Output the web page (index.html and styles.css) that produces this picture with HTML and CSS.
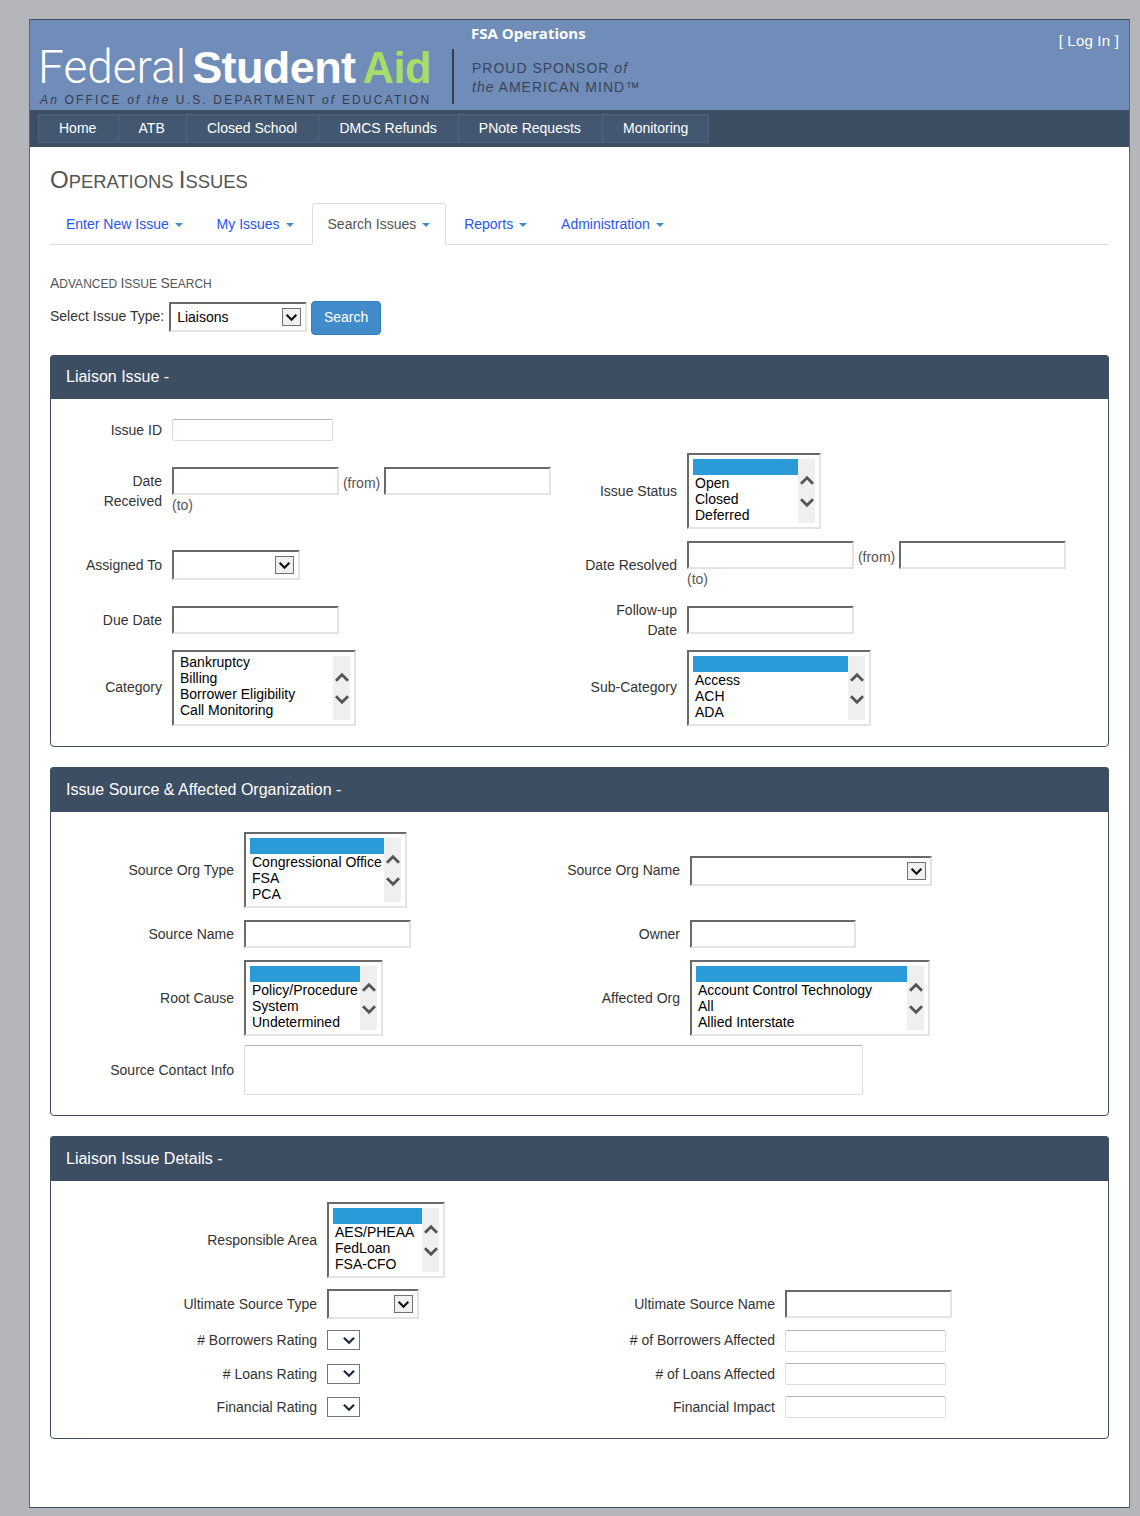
FILE: index.html
```html
<!DOCTYPE html>
<html lang="en">
<head>
    <meta charset="UTF-8">
    <meta name="viewport" content="width=device-width, initial-scale=1.0">
    <title>Operations Issues</title>
    <link rel="stylesheet" href="styles.css">
</head>
<body>
    <svg class="defs" width="0" height="0">
        <symbol id="chev-down" viewBox="0 0 12 8"><path d="M1.5 1.5 L6 6 L10.5 1.5" fill="none" stroke="currentColor"/></symbol>
        <symbol id="chev-up" viewBox="0 0 12 8"><path d="M1.5 6.5 L6 2 L10.5 6.5" fill="none" stroke="currentColor"/></symbol>
    </svg>
    <div class="wrapper">
        <header class="banner">
            <div class="logo">
                <div class="logo-name"><span class="fed">Federal</span><span class="stu">Student</span><span class="aid">Aid</span></div>
                <div class="logo-sub"><i>An</i> OFFICE <i>of the</i> U.S. DEPARTMENT <i>of</i> EDUCATION</div>
            </div>
            <div class="banner-mid">
                <div class="app-name">FSA Operations</div>
                <div class="sponsor">PROUD SPONSOR <i>of</i><br><i>the</i> AMERICAN MIND™</div>
            </div>
            <a class="login">[ Log In ]</a>
        </header>
        <nav class="topnav">
            <ul>
                <li>Home</li>
                <li>ATB</li>
                <li>Closed School</li>
                <li>DMCS Refunds</li>
                <li>PNote Requests</li>
                <li>Monitoring</li>
            </ul>
        </nav>
        <main class="content">
            <h1 class="page-title"><span class="cap">O</span>PERATIONS <span class="cap">I</span>SSUES</h1>
            <ul class="tabs">
                <li>Enter New Issue <b class="caret"></b></li>
                <li>My Issues <b class="caret"></b></li>
                <li class="active">Search Issues <b class="caret"></b></li>
                <li>Reports <b class="caret"></b></li>
                <li>Administration <b class="caret"></b></li>
            </ul>

            <h2 class="sub-title"><span class="cap">A</span>DVANCED <span class="cap">I</span>SSUE <span class="cap">S</span>EARCH</h2>
            <div class="search-bar">
                <label>Select Issue Type:</label>
                <div class="drop w138">Liaisons<span class="drop-btn"><svg><use href="#chev-down"/></svg></span></div>
                <button type="button" class="btn-search">Search</button>
            </div>

            <section class="panel">
                <div class="panel-head">Liaison Issue -</div>
                <div class="panel-body grid-1">
                    <label class="lbl">Issue ID</label>
                    <div class="ctl"><input class="flat w161"></div>
                    <div></div><div></div>

                    <label class="lbl">Date<br>Received</label>
                    <div class="ctl">
                        <input class="inset w167"> <span class="note from">(from)</span> <input class="inset w167"><br>
                        <span class="note">(to)</span>
                    </div>
                    <label class="lbl">Issue Status</label>
                    <div class="ctl">
                        <div class="list w134">
                            <div class="opts"><div class="opt-sel"></div><div>Open</div><div>Closed</div><div>Deferred</div></div>
                            <div class="sbar"><svg><use href="#chev-up"/></svg><svg><use href="#chev-down"/></svg></div>
                        </div>
                    </div>

                    <label class="lbl">Assigned To</label>
                    <div class="ctl"><div class="drop w128"><span class="drop-btn"><svg><use href="#chev-down"/></svg></span></div></div>
                    <label class="lbl">Date Resolved</label>
                    <div class="ctl">
                        <input class="inset w167"> <span class="note from">(from)</span> <input class="inset w167"><br>
                        <span class="note">(to)</span>
                    </div>

                    <label class="lbl up1">Due Date</label>
                    <div class="ctl up1"><input class="inset w167"></div>
                    <label class="lbl up1">Follow-up<br>Date</label>
                    <div class="ctl up1"><input class="inset w167"></div>

                    <label class="lbl up2">Category</label>
                    <div class="ctl up2">
                        <div class="list w184">
                            <div class="opts"><div>Bankruptcy</div><div>Billing</div><div>Borrower Eligibility</div><div>Call Monitoring</div></div>
                            <div class="sbar"><svg><use href="#chev-up"/></svg><svg><use href="#chev-down"/></svg></div>
                        </div>
                    </div>
                    <label class="lbl up2">Sub-Category</label>
                    <div class="ctl up2">
                        <div class="list w184">
                            <div class="opts"><div class="opt-sel"></div><div>Access</div><div>ACH</div><div>ADA</div></div>
                            <div class="sbar"><svg><use href="#chev-up"/></svg><svg><use href="#chev-down"/></svg></div>
                        </div>
                    </div>
                </div>
            </section>

            <section class="panel">
                <div class="panel-head">Issue Source &amp; Affected Organization -</div>
                <div class="panel-body grid-2">
                    <label class="lbl">Source Org Type</label>
                    <div class="ctl">
                        <div class="list w163">
                            <div class="opts"><div class="opt-sel"></div><div>Congressional Office</div><div>FSA</div><div>PCA</div></div>
                            <div class="sbar"><svg><use href="#chev-up"/></svg><svg><use href="#chev-down"/></svg></div>
                        </div>
                    </div>
                    <label class="lbl">Source Org Name</label>
                    <div class="ctl nudge"><div class="drop w242"><span class="drop-btn"><svg><use href="#chev-down"/></svg></span></div></div>

                    <label class="lbl">Source Name</label>
                    <div class="ctl"><input class="inset w167"></div>
                    <label class="lbl">Owner</label>
                    <div class="ctl"><input class="inset w166"></div>

                    <label class="lbl">Root Cause</label>
                    <div class="ctl">
                        <div class="list w139">
                            <div class="opts"><div class="opt-sel"></div><div>Policy/Procedure</div><div>System</div><div>Undetermined</div></div>
                            <div class="sbar"><svg><use href="#chev-up"/></svg><svg><use href="#chev-down"/></svg></div>
                        </div>
                    </div>
                    <label class="lbl">Affected Org</label>
                    <div class="ctl">
                        <div class="list w240">
                            <div class="opts"><div class="opt-sel"></div><div>Account Control Technology</div><div>All</div><div>Allied Interstate</div></div>
                            <div class="sbar"><svg><use href="#chev-up"/></svg><svg><use href="#chev-down"/></svg></div>
                        </div>
                    </div>

                    <label class="lbl up3">Source Contact Info</label>
                    <div class="ctl span3 up3"><textarea class="flat area"></textarea></div>
                </div>
            </section>

            <section class="panel">
                <div class="panel-head">Liaison Issue Details -</div>
                <div class="panel-body grid-3">
                    <label class="lbl">Responsible Area</label>
                    <div class="ctl">
                        <div class="list w118">
                            <div class="opts"><div class="opt-sel"></div><div>AES/PHEAA</div><div>FedLoan</div><div>FSA-CFO</div></div>
                            <div class="sbar"><svg><use href="#chev-up"/></svg><svg><use href="#chev-down"/></svg></div>
                        </div>
                    </div>
                    <div></div><div></div>

                    <label class="lbl pull1">Ultimate Source Type</label>
                    <div class="ctl pull1"><div class="drop w92"><span class="drop-btn"><svg><use href="#chev-down"/></svg></span></div></div>
                    <label class="lbl pull1">Ultimate Source Name</label>
                    <div class="ctl pull1"><input class="inset w167"></div>

                    <label class="lbl"># Borrowers Rating</label>
                    <div class="ctl"><div class="mini"><svg><use href="#chev-down"/></svg></div></div>
                    <label class="lbl"># of Borrowers Affected</label>
                    <div class="ctl"><input class="flat w161"></div>

                    <label class="lbl"># Loans Rating</label>
                    <div class="ctl"><div class="mini"><svg><use href="#chev-down"/></svg></div></div>
                    <label class="lbl"># of Loans Affected</label>
                    <div class="ctl"><input class="flat w161"></div>

                    <label class="lbl">Financial Rating</label>
                    <div class="ctl"><div class="mini"><svg><use href="#chev-down"/></svg></div></div>
                    <label class="lbl">Financial Impact</label>
                    <div class="ctl"><input class="flat w161"></div>
                </div>
            </section>
        </main>
    </div>
</body>
</html>
```

FILE: styles.css
```css
* {
    box-sizing: border-box;
}

body {
    margin: 0;
    padding: 19px 10px 8px 29px;
    background-color: #b5b6ba;
    font-family: "Liberation Sans", Arial, sans-serif;
    font-size: 14px;
    color: #333;
}

.defs {
    position: absolute;
}

.wrapper {
    width: 1101px;
    height: 1489px;
    background-color: #fff;
    border: 1px solid #3d4e63;
    border-left-color: #5c6673;
    border-right-color: #5c6673;
}

/* banner */
.banner {
    height: 90px;
    background-color: #708cb9;
    display: flex;
    position: relative;
}

.logo {
    width: 392px;
    margin-left: 8px;
    padding-top: 23px;
}

.logo-name {
    display: flex;
    align-items: baseline;
    line-height: 49px;
    color: #fff;
    white-space: nowrap;
}

.fed {
    font-family: Roboto, sans-serif;
    font-weight: 300;
    font-size: 46px;
    margin-right: 6px;
}

.stu {
    font-weight: bold;
    font-size: 45px;
    letter-spacing: -0.6px;
    margin-right: 7px;
}

.aid {
    font-weight: bold;
    font-size: 43.5px;
    letter-spacing: -0.4px;
    color: #a8dc6b;
}

.logo-sub {
    padding-left: 2px;
    font-size: 12px;
    letter-spacing: 2.18px;
    color: #333f4f;
    white-space: nowrap;
}

.banner-mid {
    margin-left: 22px;
    position: relative;
    padding-left: 20px;
}

.app-name {
    font-family: "Open Sans", sans-serif;
    font-weight: bold;
    font-size: 15px;
    color: #fff;
    margin-top: 3px;
    height: 36px;
    margin-left: -1px;
}

.sponsor {
    font-size: 14px;
    line-height: 18.5px;
    letter-spacing: 1px;
    color: #39465a;
    white-space: nowrap;
}

.banner-mid::before {
    content: "";
    position: absolute;
    left: 0;
    top: 29px;
    height: 55px;
    width: 2px;
    background-color: #333f50;
}

.login {
    position: absolute;
    right: 10px;
    top: 12px;
    color: #fff;
    font-size: 15px;
    letter-spacing: 0.2px;
}

/* top nav */
.topnav {
    height: 37px;
    background-color: #3d4e63;
    padding: 4px 0 0 8px;
}

.topnav ul {
    display: flex;
    margin: 0;
    padding: 0;
    list-style: none;
    width: fit-content;
    height: 29px;
    border: 1px solid #4e6279;
    background-color: #435870;
}

.topnav li {
    padding: 0 21.2px 0 20px;
    line-height: 27px;
    color: #fff;
    border-right: 1px solid #4e6279;
}

.topnav li:last-child {
    padding-right: 20px;
    border-right: 0;
}

/* page */
.content {
    padding: 20px 20px 0 20px;
}

.page-title {
    margin: 0;
    height: 26px;
    font-size: 18.4px;
    line-height: 26px;
    font-weight: normal;
    color: #555;
}

.page-title .cap {
    font-size: 24px;
}

.tabs {
    display: flex;
    margin: 11px 0 0 0;
    padding: 0;
    list-style: none;
    height: 41px;
    border-bottom: 1px solid #ddd;
}

.tabs li {
    padding: 0 16px;
    margin-right: 2px;
    line-height: 41px;
    color: #2a54f0;
}

.tabs li.active {
    height: 42px;
    margin-top: -1px;
    color: #555;
    background-color: #fff;
    border: 1px solid #ddd;
    border-bottom-color: #fff;
    border-radius: 4px 4px 0 0;
    padding: 0 15px;
    line-height: 41px;
}

.caret {
    display: inline-block;
    width: 0;
    height: 0;
    margin-left: 2px;
    vertical-align: middle;
    border-top: 4px solid #428bca;
    border-left: 4px solid transparent;
    border-right: 4px solid transparent;
}

.sub-title {
    margin: 30px 0 0 0;
    height: 16px;
    font-size: 12px;
    line-height: 16px;
    font-weight: normal;
    color: #555;
}

.sub-title .cap {
    font-size: 14px;
}

.search-bar {
    display: flex;
    align-items: flex-start;
    margin-top: 10px;
    height: 34px;
}

.search-bar label {
    margin-right: 5px;
    line-height: 30px;
}

.search-bar .drop {
    margin-top: 1px;
}

.btn-search {
    margin-left: 4px;
    width: 70px;
    height: 34px;
    padding: 0 0 2px 0;
    background-color: #428bca;
    color: #fff;
    border: 1px solid #357ebd;
    border-radius: 4px;
    font-family: inherit;
    font-size: 14px;
}

/* panels */
.panel {
    margin-top: 20px;
    border: 1px solid #3d4e63;
    border-radius: 4px;
}

.panel-head {
    height: 44px;
    margin: -1px -1px 0 -1px;
    padding-left: 16px;
    background-color: #3d4e63;
    color: #fff;
    font-size: 16px;
    line-height: 44px;
    border-radius: 4px 4px 0 0;
}

.panel + .panel .panel-head {
    height: 45px;
    line-height: 46px;
}

.panel-body {
    display: grid;
    align-items: center;
}

.grid-1 {
    grid-template-columns: 111px 404px 111px 1fr;
    row-gap: 12px;
    padding: 20px 0;
}

.grid-2 {
    grid-template-columns: 183px 312px 134px 1fr;
    row-gap: 12px;
    padding: 20px 0;
}

.grid-3 {
    grid-template-columns: 266px 294px 164px 1fr;
    row-gap: 11px;
    padding: 21px 0 20px 0;
}

.up1 {
    margin-top: -1px;
}

.up2 {
    margin-top: -2px;
}

.lbl.up2 {
    margin-bottom: 2px;
}

.up3 {
    margin-top: -3px;
}

.pull1 {
    margin-bottom: -1px;
}

.nudge {
    margin-top: 2px;
}

.lbl {
    text-align: right;
    line-height: 20px;
    color: #333;
    white-space: nowrap;
}

.ctl {
    padding-left: 10px;
    line-height: 20px;
}

.span3 {
    grid-column: span 3;
}

.note {
    color: #555;
}

.from {
    vertical-align: -3px;
}

/* form bits */
input,
textarea {
    display: inline-block;
    margin: 0;
    padding: 0;
    background-color: #fff;
    font-family: inherit;
    vertical-align: middle;
    outline: 0;
}

.flat {
    height: 22px;
    border: 1px solid #ddd;
    border-top-color: #b5b5b5;
    border-radius: 2px;
}

.inset {
    height: 28px;
    border: 2px solid;
    border-color: #696969 #e3e3e3 #e3e3e3 #696969;
}

.area {
    display: block;
    width: 619px;
    height: 50px;
    resize: none;
}

.w161 { width: 161px; }
.w166 { width: 166px; }
.w167 { width: 167px; }
.w92 { width: 92px; }
.w118 { width: 118px; }
.w128 { width: 128px; }
.w134 { width: 134px; }
.w138 { width: 138px; }
.w139 { width: 139px; }
.w163 { width: 163px; }
.w184 { width: 184px; }
.w240 { width: 240px; }
.w242 { width: 242px; }

.drop {
    height: 30px;
    padding-left: 6px;
    display: flex;
    align-items: center;
    background-color: #fff;
    color: #000;
    border: 2px solid;
    border-color: #696969 #e3e3e3 #e3e3e3 #696969;
}

.drop-btn {
    width: 19px;
    height: 18px;
    margin-left: auto;
    margin-right: 4px;
    display: flex;
    align-items: center;
    justify-content: center;
    background-color: #f0f0f0;
    border: 1px solid #707070;
    color: #111;
}

.drop-btn svg {
    width: 13px;
    height: 9px;
    stroke-width: 2;
}

.mini {
    width: 33px;
    height: 20px;
    display: flex;
    align-items: center;
    justify-content: flex-end;
    padding-right: 3px;
    border: 1px solid #777;
    color: #1c2a44;
}

.mini svg {
    width: 14px;
    height: 9px;
    stroke-width: 2;
}

.list {
    height: 76px;
    padding: 4px;
    display: flex;
    background-color: #fff;
    border: 2px solid;
    border-color: #696969 #e3e3e3 #e3e3e3 #696969;
    color: #000;
}

.opts {
    flex: 1;
    min-width: 0;
    line-height: 16px;
    margin-top: -2px;
    white-space: nowrap;
    overflow: hidden;
}

.opts div {
    padding-left: 2px;
}

.opts .opt-sel {
    height: 16px;
    margin-top: 2px;
    background-color: #2b9ad9;
}

.sbar {
    width: 17px;
    background-color: #efefef;
    color: #555;
    display: flex;
    flex-direction: column;
    align-items: center;
    justify-content: center;
    gap: 11px;
}

.sbar svg {
    width: 16px;
    height: 11px;
    stroke-width: 2.1;
}
```
